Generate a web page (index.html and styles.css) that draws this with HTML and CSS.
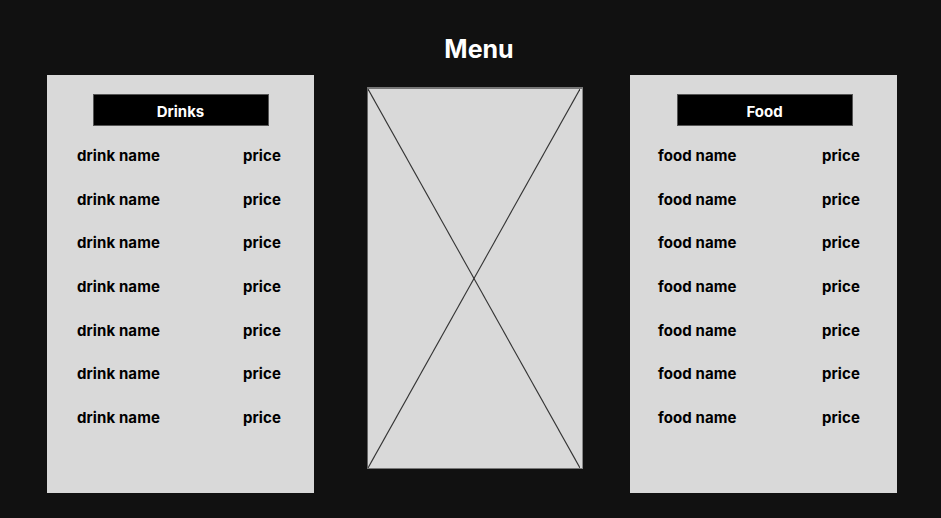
FILE: index.html
```html
<!DOCTYPE html>
<html lang="en">
	<head>
		<meta charset="UTF-8" />
		<meta name="viewport" content="width=device-width, initial-scale=1.0" />
		<title>Menu</title>
		<link rel="stylesheet" href="styles.css">
	</head>
	<body>
		<main>
			<h1>Menu</h1>

			<div class="board">
				<section class="panel drinks">
					<h2>Drinks</h2>
					<ul>
						<li><span>drink name</span><span>price</span></li>
						<li><span>drink name</span><span>price</span></li>
						<li><span>drink name</span><span>price</span></li>
						<li><span>drink name</span><span>price</span></li>
						<li><span>drink name</span><span>price</span></li>
						<li><span>drink name</span><span>price</span></li>
						<li><span>drink name</span><span>price</span></li>
					</ul>
				</section>

				<div class="photo">
					<svg viewBox="0 0 100 100" preserveAspectRatio="none">
						<line x1="0" y1="0" x2="100" y2="100" vector-effect="non-scaling-stroke" />
						<line x1="100" y1="0" x2="0" y2="100" vector-effect="non-scaling-stroke" />
					</svg>
				</div>

				<section class="panel food">
					<h2>Food</h2>
					<ul>
						<li><span>food name</span><span>price</span></li>
						<li><span>food name</span><span>price</span></li>
						<li><span>food name</span><span>price</span></li>
						<li><span>food name</span><span>price</span></li>
						<li><span>food name</span><span>price</span></li>
						<li><span>food name</span><span>price</span></li>
						<li><span>food name</span><span>price</span></li>
					</ul>
				</section>
			</div>
		</main>
	</body>
</html>
```

FILE: styles.css
```css
* {
	padding: 0;
	margin: 0;
	box-sizing: border-box;
}
ul {
	list-style: none;
}

body {
	background-color: #111111;
	font-family: Inter, "Liberation Sans", sans-serif;
	color: #000;
}

main {
	padding-top: 34px;
}

h1 {
	font-size: 25px;
	line-height: 30px;
	font-weight: 700;
	color: #fff;
	text-align: center;
	padding-left: 17px;
	margin-bottom: 11px;
}

.board {
	display: flex;
	align-items: flex-start;
	padding-left: 47px;
}

.panel {
	width: 267px;
	height: 418px;
	background-color: #d9d9d9;
	padding-top: 19px;
}
.panel h2 {
	width: 176px;
	height: 32px;
	margin: 0 auto 8px;
	background-color: #000;
	border: 1px solid #555;
	color: #fff;
	font-size: 15px;
	font-weight: 700;
	line-height: 33px;
	text-align: center;
}
.panel li {
	display: grid;
	grid-template-columns: 166px auto;
	height: 43.67px;
	line-height: 43.67px;
	padding-left: 30px;
	font-size: 15px;
	font-weight: 700;
	letter-spacing: 0.1px;
}
.food {
	margin-left: 47px;
}
.food h2 {
	position: relative;
	left: 1px;
}
.food li {
	grid-template-columns: 164px auto;
	padding-left: 28px;
}

.photo {
	width: 216px;
	height: 382px;
	margin: 12px 0 0 53px;
	background-color: #d9d9d9;
	border-top: 2px solid #777;
	border-left: 1px solid #666;
	border-right: 1px solid #888;
	border-bottom: 1px solid #777;
}
.photo svg {
	display: block;
	width: 100%;
	height: 100%;
	padding-right: 2px;
}
.photo line {
	stroke: #333;
	stroke-width: 1.1;
}
```
